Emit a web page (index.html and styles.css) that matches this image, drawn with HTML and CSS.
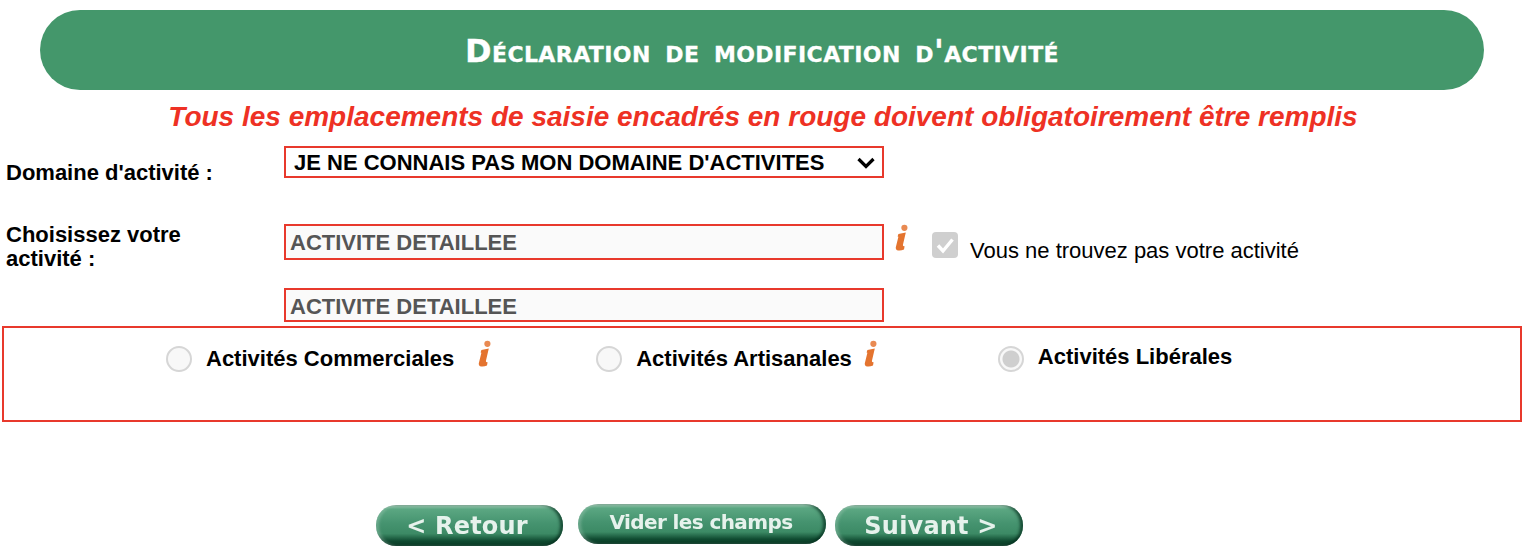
FILE: index.html
```html
<!DOCTYPE html>
<html lang="fr">
<head>
<meta charset="utf-8">
<title>Déclaration de modification d'activité</title>
<link rel="stylesheet" href="styles.css">
</head>
<body>
<svg class="defs" width="0" height="0" aria-hidden="true">
  <defs>
    <symbol id="info" viewBox="0 0 14 28">
      <circle cx="9.4" cy="3.8" r="3.1" fill="#e98a52"/>
      <path d="M3.4 10 L10.8 8.6 L8 20.5 Q7.6 22.6 9.6 22.2 L9 25.4 Q5.4 27.2 2 26.2 Q0.2 25.2 1 22.4 L3.4 12.8 L2.6 12.4 Z" fill="#e4742f"/>
    </symbol>
  </defs>
</svg>
<header class="banner"><h1 class="banner-title">Déclaration de modification d'activité</h1></header>
<p class="notice">Tous les emplacements de saisie encadrés en rouge doivent obligatoirement être remplis</p>
<form class="form">
  <div class="row row-domain">
    <label class="label label-domain">Domaine d'activité :</label>
    <div class="select">
      <span>JE NE CONNAIS PAS MON DOMAINE D'ACTIVITES</span>
      <svg class="chevron" viewBox="0 0 18 12"><path d="M1.5 2 L9 9.5 L16.5 2" fill="none" stroke="#000" stroke-width="3.2"/></svg>
    </div>
  </div>
  <div class="row row-activity">
    <label class="label label-activity">Choisissez votre activité :</label>
    <div class="field field-tall">ACTIVITE DETAILLEE</div>
    <svg class="info info-a"><use href="#info"/></svg>
    <span class="check"><svg viewBox="0 0 26 26"><path d="M6 13.5 L11 19 L20.5 7.5" fill="none" stroke="#fff" stroke-width="3.4"/></svg></span>
    <span class="check-label">Vous ne trouvez pas votre activité</span>
  </div>
  <div class="row row-second">
    <div class="field field-short">ACTIVITE DETAILLEE</div>
  </div>
  <div class="types">
    <span class="radio radio-1"></span>
    <span class="type type-1">Activités Commerciales</span>
    <svg class="info info-b"><use href="#info"/></svg>
    <span class="radio radio-2"></span>
    <span class="type type-2">Activités Artisanales</span>
    <svg class="info info-c"><use href="#info"/></svg>
    <span class="radio radio-3 radio-on"></span>
    <span class="type type-3">Activités Libérales</span>
  </div>
  <div class="actions">
    <button type="button" class="btn btn-back">&lt; Retour</button>
    <button type="button" class="btn btn-clear">Vider les champs</button>
    <button type="button" class="btn btn-next">Suivant &gt;</button>
  </div>
</form>
</body>
</html>
```
FILE: styles.css
```css
* { box-sizing: border-box; }
html, body { margin: 0; padding: 0; background: #fff; }
body { height: 554px; overflow: hidden; font-family: "Liberation Sans", Arial, sans-serif; color: #000; }
.defs { display: block; height: 0; }

.banner { margin: 10px 42px 0 40px; height: 80px; border-radius: 40px; background: #44976b; display: flex; align-items: center; justify-content: center; }
.banner-title { margin: 0; padding-top: 2px; color: #fff; font: 700 32px "DejaVu Sans", sans-serif; font-variant: small-caps; letter-spacing: .4px; word-spacing: 3px; -webkit-text-stroke: .3px #fff; }

.notice { margin: 11px 0 0; height: 32px; text-align: center; font-size: 28px; line-height: 32px; font-weight: 700; font-style: italic; color: #ee3124; }

.form { display: block; }
.row { display: flex; align-items: flex-start; padding-left: 284px; position: relative; }
.label { font-size: 22px; line-height: 24px; font-weight: 700; flex: none; width: 278px; margin-left: -278px; }
.row-domain { margin-top: 13px; height: 32px; }
.label-domain { padding-top: 15px; }
.select { width: 600px; height: 32px; border: 2px solid #e8392c; display: flex; align-items: center; justify-content: space-between; padding: 1px 7px 0 8px; font-size: 22px; font-weight: 700; }
.chevron { width: 18px; height: 12px; flex: none; }

.row-activity { margin-top: 46px; height: 36px; }
.label-activity { margin-top: -1px; width: 200px; margin-left: -278px; margin-right: 78px; }
.field { width: 600px; border: 2px solid #e8392c; background: #fafafa; color: #555; font-size: 22px; font-weight: 700; padding-left: 4px; flex: none; }
.field-tall { height: 36px; line-height: 33px; }
.field-short { height: 34px; line-height: 33px; }
.info { display: block; flex: none; width: 14px; height: 28px; filter: blur(.7px); }
.info-a { margin: 0 0 0 11px; }
.check { flex: none; width: 26px; height: 26px; margin: 8px 0 0 23px; border-radius: 4px; background: #cfcfcf; }
.check svg { display: block; width: 26px; height: 26px; }
.check-label { font-size: 22px; line-height: 24px; margin: 15px 0 0 12px; }

.row-second { margin-top: 28px; height: 34px; }

.types { margin: 4px 4px 0 2px; height: 96px; border: 2px solid #e8392c; display: flex; align-items: flex-start; padding-left: 162px; }
.radio { flex: none; width: 26px; height: 26px; border-radius: 50%; border: 2px solid #d6d6d6; background: #f8f8f8; margin-top: 18px; }
.radio-on { background: radial-gradient(circle, #cfcfcf 0 8px, #f8f8f8 9px); }
.type { flex: none; font-size: 22px; line-height: 24px; font-weight: 700; margin-left: 14px; margin-top: 19px; }
.type-3 { margin-top: 17px; }
.info-b { margin: 12px 0 0 24px; }
.radio-2 { margin-left: 104px; }
.info-c { margin: 12px 0 0 12px; }
.radio-3 { margin-left: 120px; }

.actions { margin-top: 83px; margin-left: 376px; display: flex; align-items: flex-start; }
.btn { flex: none; border: 0; padding: 0; height: 41px; border-radius: 20px; color: #e6f2ec; font: 700 24px "DejaVu Sans", sans-serif; letter-spacing: .2px; background: linear-gradient(#a6d0ba 0, #5ba782 10%, #45936f 45%, #3c8a65 70%, #0f4a30 88%, #0a3a26 100%); box-shadow: inset 3px 0 3px rgba(255,255,255,.2), inset -3px 0 3px rgba(0,40,25,.65); filter: blur(.6px); }
.btn-back { width: 187px; padding-right: 5px; }
.btn-clear { width: 248px; height: 40px; margin: -1px 0 0 15px; font-size: 20px; letter-spacing: -.6px; padding: 0 2px 4px 0; }
.btn-next { width: 188px; margin-left: 9px; padding-left: 4px; }
```
